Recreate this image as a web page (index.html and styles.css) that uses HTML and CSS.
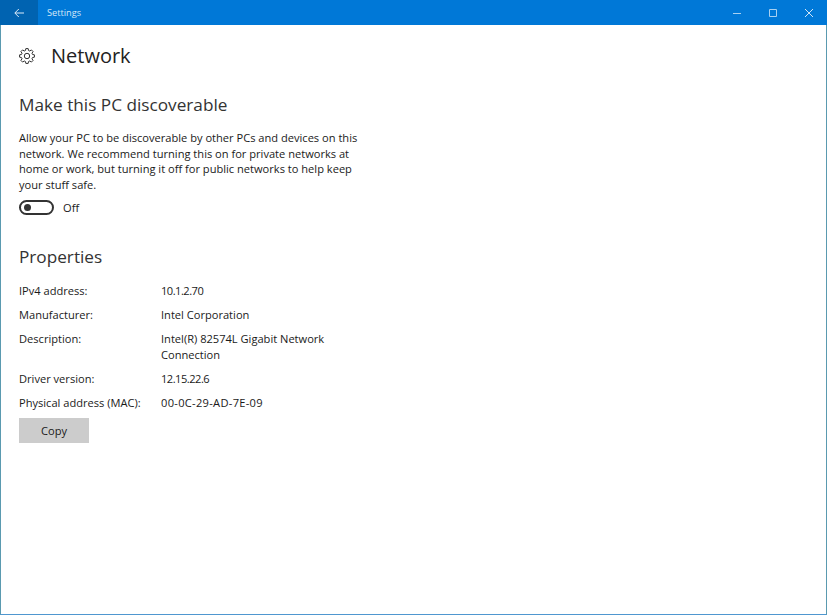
FILE: index.html
```html
<!DOCTYPE html>
<html lang="en">
<head>
    <meta charset="UTF-8">
    <title>Settings</title>
    <link rel="stylesheet" href="styles.css">
</head>
<body>
<div class="window">
    <div class="titlebar">
        <div class="back-button">
            <svg width="10" height="10" viewBox="0 0 10 10" fill="none" stroke="#dcebf8" stroke-width="1">
                <path d="M10 5H1M4.8 1L.8 5l4 4"/>
            </svg>
        </div>
        <span class="title">Settings</span>
        <div class="window-buttons">
            <svg width="8" height="8" viewBox="0 0 8 8" fill="none" stroke="#a9d0f0"><path d="M0 4.5h8"/></svg>
            <svg width="8" height="8" viewBox="0 0 8 8" fill="none" stroke="#a9d0f0"><path d="M.5.5h7v7h-7z"/></svg>
            <svg width="8" height="8" viewBox="0 0 8 8" fill="none" stroke="#cfe4f6"><path d="M0 0l8 8M8 0L0 8"/></svg>
        </div>
    </div>
    <div class="content">
        <div class="page-header">
            <svg class="gear" width="16" height="16" viewBox="0 0 16 16" fill="none" stroke="#333" stroke-width="1">
                <circle cx="8" cy="8" r="2.7"/>
                <polygon points="13.48,6.43 15.41,6.83 15.41,9.17 13.48,9.57 12.98,10.76 14.07,12.41 12.41,14.07 10.76,12.98 9.57,13.48 9.17,15.41 6.83,15.41 6.43,13.48 5.24,12.98 3.59,14.07 1.93,12.41 3.02,10.76 2.52,9.57 .59,9.17 .59,6.83 2.52,6.43 3.02,5.24 1.93,3.59 3.59,1.93 5.24,3.02 6.43,2.52 6.83,.59 9.17,.59 9.57,2.52 10.76,3.02 12.41,1.93 14.07,3.59 12.98,5.24"/>
            </svg>
            <h1>Network</h1>
        </div>

        <h2>Make this PC discoverable</h2>
        <p class="intro">Allow your PC to be discoverable by other PCs and devices on this network. We recommend turning this on for private networks at home or work, but turning it off for public networks to help keep your stuff safe.</p>
        <div class="toggle-row">
            <div class="toggle"><div class="knob"></div></div>
            <span>Off</span>
        </div>

        <h2 class="properties-title">Properties</h2>
        <div class="properties">
            <div>IPv4 address:</div><div class="narrow-value">10.1.2.70</div>
            <div>Manufacturer:</div><div>Intel Corporation</div>
            <div>Description:</div><div>Intel(R) 82574L Gigabit Network Connection</div>
            <div>Driver version:</div><div class="narrow-value">12.15.22.6</div>
            <div>Physical address (MAC):</div><div class="wide-value">00-0C-29-AD-7E-09</div>
        </div>
        <button class="copy-button">Copy</button>
    </div>
</div>
</body>
</html>
```

FILE: styles.css
```css
html, body {
    height: 100%;
}

body {
    margin: 0;
    font-family: "Open Sans", "Noto Sans", sans-serif;
    color: #1a1a1a;
    background-color: #fff;
}

.window {
    box-sizing: border-box;
    height: 100%;
    border-left: 1px solid #5a9ab0;
    border-right: 1px solid #5a9ab0;
    border-bottom: 1px solid #4f97d0;
    display: flex;
    flex-direction: column;
}

.titlebar {
    height: 25px;
    margin: 0 -1px;
    background-color: #0078d7;
    color: #d5e8f8;
    display: flex;
    align-items: center;
    font-size: 9.2px;
    flex-shrink: 0;
}

.back-button {
    width: 38px;
    height: 25px;
    background-color: #0063b1;
    display: flex;
    align-items: center;
    justify-content: center;
}

.title {
    margin-left: 9px;
}

.window-buttons {
    margin-left: auto;
    margin-right: 14px;
    display: flex;
    gap: 28px;
}

.content {
    padding: 0 18px;
}

.page-header {
    display: flex;
    align-items: center;
    height: 61px;
}

.gear {
    margin-right: 16px;
}

h1 {
    margin: 0;
    font-size: 20px;
    font-weight: 400;
    color: #222;
}

h2 {
    margin: 0;
    font-size: 17.2px;
    font-weight: 400;
    line-height: 24px;
    padding-top: 7px;
    color: #333;
}

.intro {
    width: 345px;
    margin: 13px 0 0;
    font-size: 11.1px;
    line-height: 15.6px;
}

.toggle-row {
    display: flex;
    align-items: center;
    font-size: 11.1px;
    height: 16px;
    margin-top: 7px;
}

.toggle {
    box-sizing: border-box;
    width: 35px;
    height: 15px;
    border: 2px solid #333;
    border-radius: 8px;
    margin-right: 9px;
    display: flex;
    align-items: center;
    padding-left: 3px;
}

.knob {
    width: 7px;
    height: 7px;
    border-radius: 50%;
    background-color: #333;
}

.properties-title {
    margin-top: 23px;
}

.properties {
    display: grid;
    grid-template-columns: 142px 170px;
    row-gap: 8px;
    font-size: 11.1px;
    line-height: 16px;
    margin-top: 14px;
}

.narrow-value {
    letter-spacing: -0.5px;
}

.wide-value {
    letter-spacing: 0.3px;
}

.copy-button {
    display: block;
    width: 70px;
    height: 25px;
    margin-top: 7px;
    border: 0;
    padding: 0;
    background-color: #ccc;
    color: #1a1a1a;
    font-family: inherit;
    font-size: 11.1px;
}
```
